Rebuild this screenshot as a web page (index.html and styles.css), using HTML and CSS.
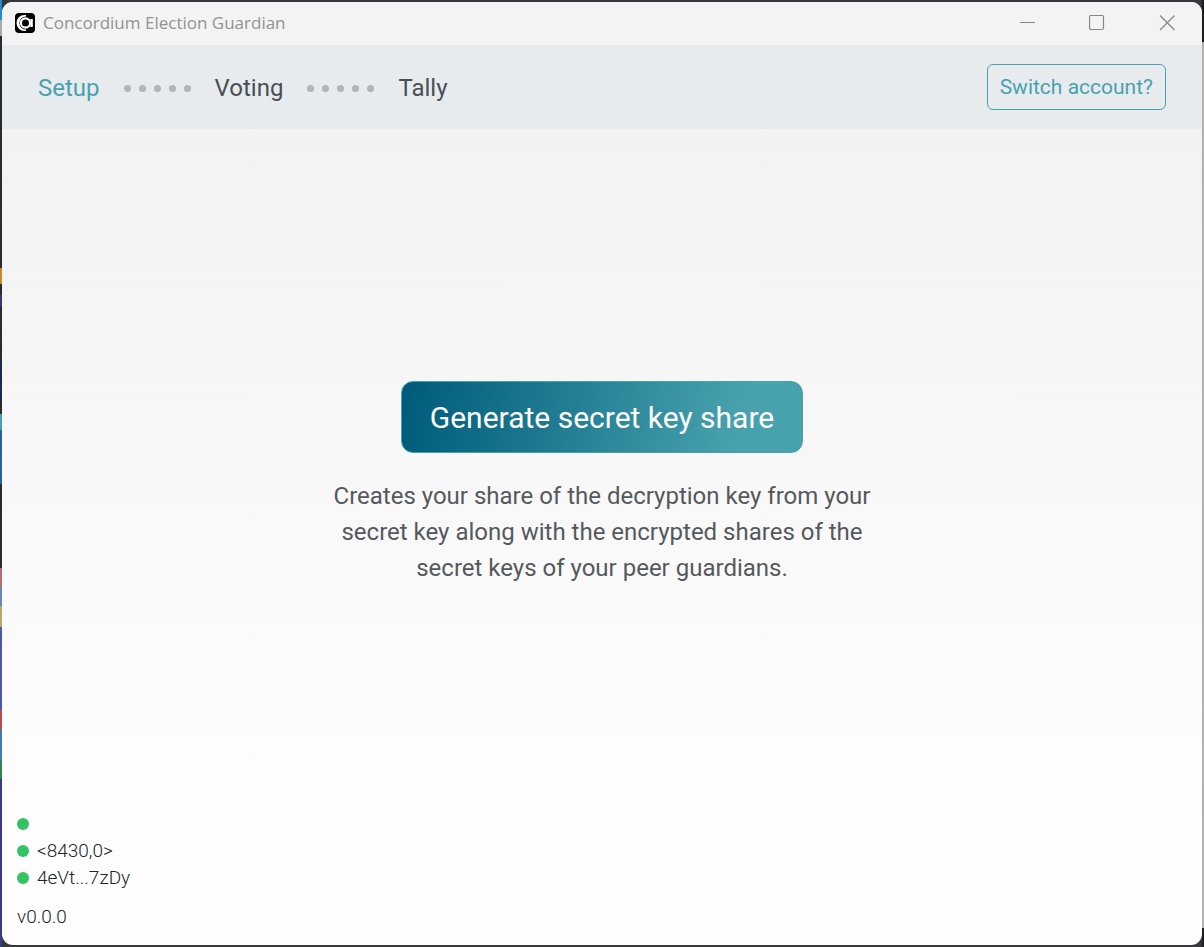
FILE: index.html
```html
<!DOCTYPE html>
<html lang="en">
<head>
<meta charset="utf-8">
<meta name="viewport" content="width=device-width, initial-scale=1">
<title>Concordium Election Guardian</title>
<link rel="stylesheet" href="styles.css">
</head>
<body class="desktop">
<div class="window">
  <header class="titlebar">
    <svg class="logo" viewBox="0 0 20 20" aria-hidden="true">
      <rect width="20" height="20" rx="4" fill="#000"/>
      <path d="M11 2H9.500A8 8 0 0 0 9.500 18H11V16.600A6.600 6.600 0 0 1 11 3.400z" fill="#fff"/>
      <circle cx="10.500" cy="10" r="4.600" fill="none" stroke="#fff" stroke-width="2.200"/>
      <path d="M15 6h2.800v8H15q2.200-4 0-8z" fill="#fff"/>
    </svg>
    <h1 class="title">Concordium Election Guardian</h1>
    <div class="controls">
      <button class="control" type="button" aria-label="Minimize"><svg viewBox="0 0 16 16"><path d="M1 7.500H16"/></svg></button>
      <button class="control" type="button" aria-label="Maximize"><svg viewBox="0 0 16 16"><rect x=".5" y=".5" width="14" height="14" rx="1.500"/></svg></button>
      <button class="control" type="button" aria-label="Close"><svg viewBox="0 0 16 16"><path d="M1 .5l14.500 14.500M15.500 .5L1 15"/></svg></button>
    </div>
  </header>
  <nav class="navbar">
    <ol class="steps">
      <li class="step step-active" aria-current="step">Setup</li>
      <li class="dots" aria-hidden="true"><i></i><i></i><i></i><i></i><i></i></li>
      <li class="step">Voting</li>
      <li class="dots" aria-hidden="true"><i></i><i></i><i></i><i></i><i></i></li>
      <li class="step">Tally</li>
    </ol>
    <button class="switch" type="button">Switch account?</button>
  </nav>
  <main class="content">
    <button class="generate" type="button">Generate secret key share</button>
    <p class="description">Creates your share of the decryption key from your secret key along with the encrypted shares of the secret keys of your peer guardians.</p>
  </main>
  <footer class="status">
    <ul class="connections">
      <li class="connection"></li>
      <li class="connection">&lt;8430,0&gt;</li>
      <li class="connection">4eVt...7zDy</li>
    </ul>
    <div class="version">v0.0.0</div>
  </footer>
</div>
</body>
</html>
```
FILE: styles.css
```css
* { box-sizing: border-box; }

.desktop {
  margin: 0;
  padding: 2px;
  min-height: 100vh;
  display: flex;
  font-family: Roboto, "Liberation Sans", sans-serif;
  background:
    linear-gradient(#2888c8 0 20px, #aaa 20px 36px, #2b2b2b 36px 268px, #c58a2c 268px 284px, #2b2b2b 284px 295px, #343878 295px 307px, #2b2b2b 307px 360px, #202850 360px 402px, #2b2b2b 402px 414px, #46a0ab 414px 430px, #25649a 430px 484px, #2b2b2b 484px 568px, #b96a72 568px 587px, #6688b8 587px 606px, #b8a86c 606px 627px, #4c58b0 627px 710px, #b84c48 710px 729px, #4678b8 729px 760px, #348050 760px 779px, #383c80 779px) left / 2px 100% no-repeat,
    linear-gradient(#1c1c1c 0 42px, #b0b0b0 42px 928px, #202024 928px) right / 2px 100% no-repeat,
    #38383c;
}

.window {
  flex: 1;
  display: flex;
  flex-direction: column;
  overflow: hidden;
  border-radius: 11px;
  background: linear-gradient(#f2f2f2 126px, #fefefe 88%);
}

.titlebar {
  display: flex;
  align-items: center;
  height: 43px;
  padding: 0 0 2px 13px;
  background: #f3f3f3;
}
.logo { width: 20px; height: 20px; margin-right: 8px; }
.title {
  margin: 0;
  color: #929292;
  font: 400 17px/24px "Open Sans", sans-serif;
}
.controls { display: flex; margin-left: auto; }
.control {
  display: flex;
  justify-content: center;
  align-items: center;
  width: 70px;
  height: 41px;
  padding: 0;
  border: 0;
  background: none;
}
.control svg { width: 16px; height: 16px; fill: none; stroke: #858585; stroke-width: 1.2; }

.navbar {
  display: flex;
  align-items: center;
  justify-content: space-between;
  padding: 19px 36px;
  background: #e7ebee;
}
.steps {
  display: flex;
  align-items: center;
  gap: 24px;
  margin: 0;
  padding: 2px 0 0;
  list-style: none;
  color: #494f54;
  font-size: 24px;
  line-height: 36px;
}
.step-active { color: #48a2ae; }
.dots { display: flex; gap: 8px; }
.dots i { width: 7px; height: 7px; border-radius: 50%; background: #adb5bd; }
.switch {
  height: 46px;
  padding: 0 12px;
  border: 1px solid #48a2ae;
  border-radius: 6px;
  background: none;
  color: #48a2ae;
  font: 400 21px/32px Roboto, sans-serif;
}

.content {
  flex: 1;
  display: flex;
  flex-direction: column;
  align-items: center;
  justify-content: center;
  padding-top: 28px;
}
.generate {
  padding: 13px 28px 11px;
  border: 1px solid #48a2ae;
  border-radius: 12px;
  background: linear-gradient(99deg, #005c7a 2%, #48a2ae 84%) border-box;
  color: #fff;
  font: 400 30px/46px Roboto, sans-serif;
}
.description {
  max-width: 564px;
  margin: 25px 0 0;
  text-align: center;
  color: #55595c;
  font-size: 24px;
  line-height: 36px;
}

.status {
  padding: 0 15px 15px;
  color: #212529;
  font-size: 19px;
  font-weight: 300;
  line-height: 27px;
}
.connections { margin: 0 0 12px; padding: 0; list-style: none; }
.connection { display: flex; align-items: center; gap: 8px; min-height: 27px; }
.connection::before {
  content: "";
  width: 12px;
  height: 12px;
  border-radius: 50%;
  background: #34c363;
}
```
